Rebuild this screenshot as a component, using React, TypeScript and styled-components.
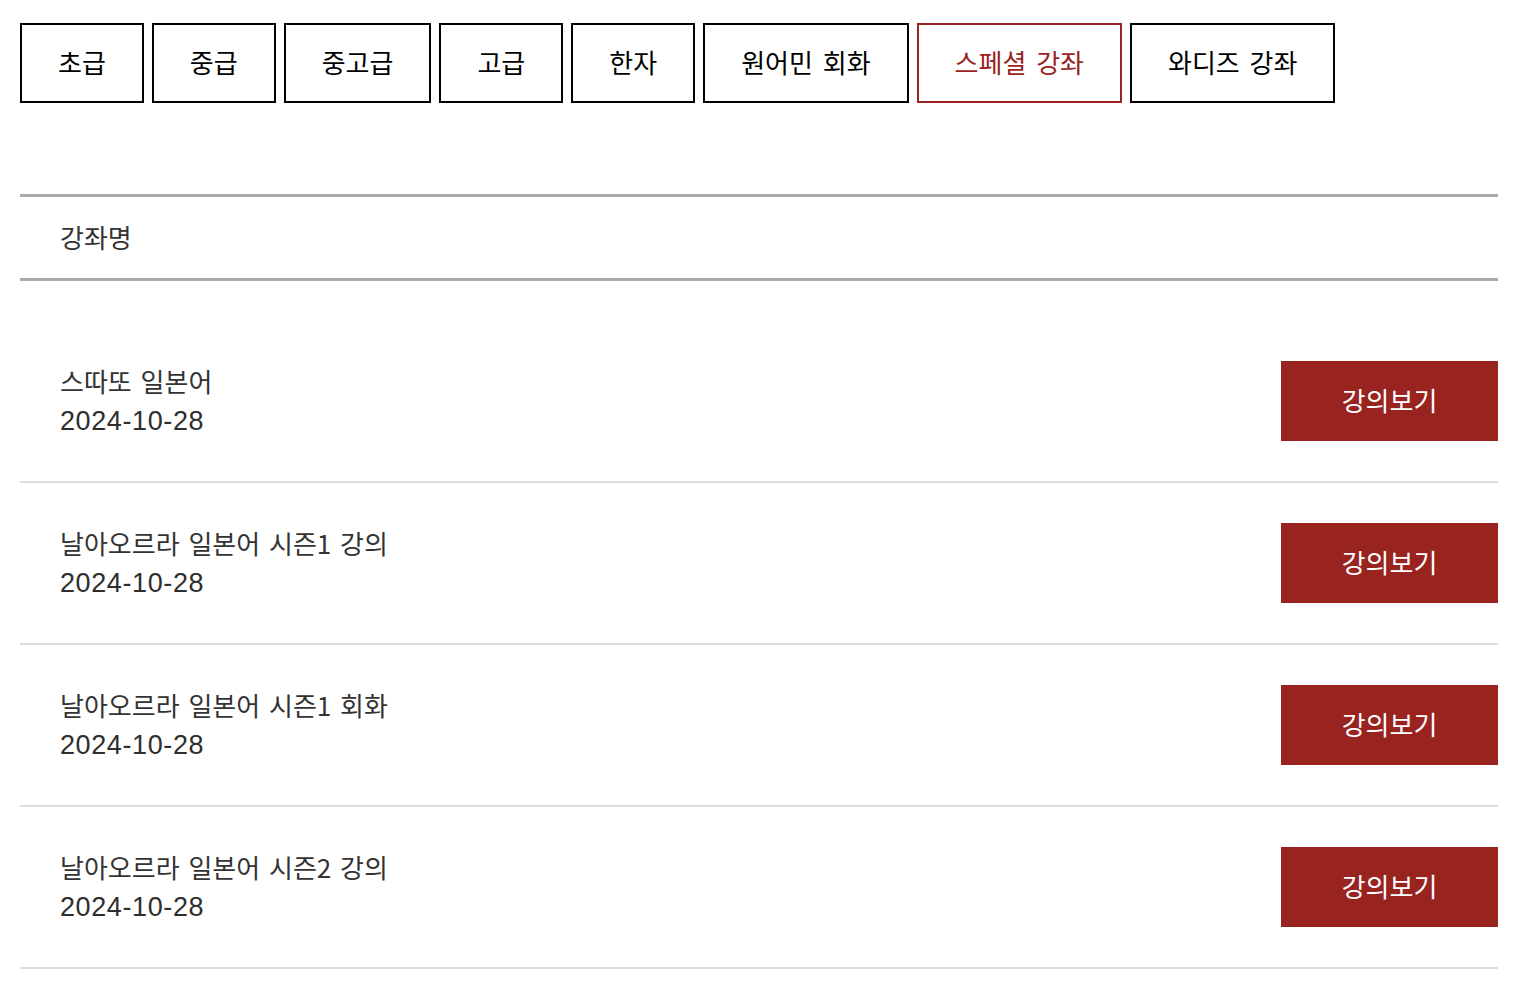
import styled, { createGlobalStyle } from 'styled-components';

const GlobalStyle = createGlobalStyle`
  body {
    margin: 0;
    background: #fff;
    font-family: "Noto Sans CJK KR", "Noto Sans", sans-serif;
  }
  * {
    box-sizing: border-box;
  }
`;

const Page = styled.div`
  padding: 23px 28px 0 20px;
`;

const TabBar = styled.div`
  display: flex;
  gap: 8px;
`;

const Tab = styled.button<{ $active?: boolean }>`
  height: 80px;
  padding: 0 36px 4px;
  background: #fff;
  border: 2px solid ${({ $active }) => ($active ? '#99231f' : '#000')};
  color: ${({ $active }) => ($active ? '#99231f' : '#000')};
  font-family: "Noto Sans CJK KR", sans-serif;
  font-size: 26px;
  word-spacing: 4px;
  cursor: pointer;
`;

const TableHead = styled.div`
  margin-top: 91px;
  padding: 19px 40px 21px;
  border-top: 3px solid #aaa;
  border-bottom: 3px solid #aaa;
  font-size: 26px;
  line-height: 41px;
  color: #333;
`;

const List = styled.ul`
  list-style: none;
  margin: 40px 0 0;
  padding: 0;
`;

const Row = styled.li`
  display: flex;
  justify-content: space-between;
  align-items: center;
  padding: 40px 0 40px 40px;
  border-bottom: 2px solid #ddd;
`;

const Info = styled.div`
  display: flex;
  flex-direction: column;
  color: #333;
`;

const Title = styled.span`
  font-size: 26px;
  line-height: 40px;
  word-spacing: 3px;
  margin-top: -2px;
`;

const Date = styled.span`
  font-family: "Liberation Sans", Arial, sans-serif;
  font-size: 27px;
  line-height: 40px;
  letter-spacing: 0.6px;
  color: #2e2e2e;
  margin-bottom: -2px;
`;

const ViewButton = styled.button`
  width: 217px;
  height: 80px;
  padding: 0 0 4px;
  border: none;
  background: #99231f;
  color: #fff;
  font-family: "Noto Sans CJK KR", sans-serif;
  font-size: 26px;
  cursor: pointer;
`;

const tabs = ['초급', '중급', '중고급', '고급', '한자', '원어민 회화', '스페셜 강좌', '와디즈 강좌'];

const courses = [
  { title: '스따또 일본어', date: '2024-10-28' },
  { title: '날아오르라 일본어 시즌1 강의', date: '2024-10-28' },
  { title: '날아오르라 일본어 시즌1 회화', date: '2024-10-28' },
  { title: '날아오르라 일본어 시즌2 강의', date: '2024-10-28' },
];

export default function App() {
  return (
    <Page>
      <GlobalStyle />
      <TabBar>
        {tabs.map((t) => (
          <Tab key={t} $active={t === '스페셜 강좌'}>
            {t}
          </Tab>
        ))}
      </TabBar>
      <TableHead>강좌명</TableHead>
      <List>
        {courses.map((c) => (
          <Row key={c.title}>
            <Info>
              <Title>{c.title}</Title>
              <Date>{c.date}</Date>
            </Info>
            <ViewButton>강의보기</ViewButton>
          </Row>
        ))}
      </List>
    </Page>
  );
}
